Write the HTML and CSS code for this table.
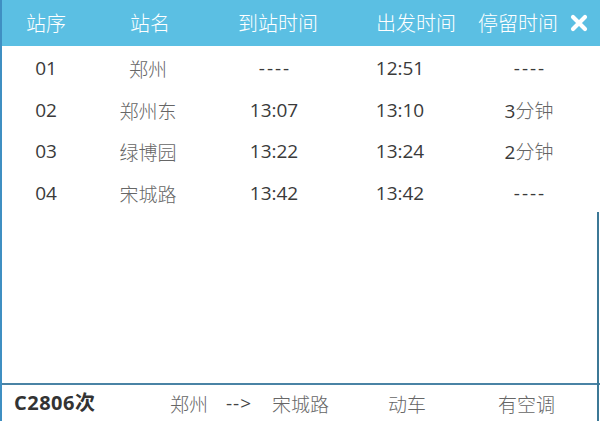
FILE: index.html
```html
<!DOCTYPE html>
<html lang="zh">
<head>
<meta charset="utf-8">
<title>C2806次</title>
<link rel="stylesheet" href="styles.css">
</head>
<body>
<div class="dialog">
  <div class="head">
    <span class="h1">站序</span>
    <span class="h2">站名</span>
    <span class="h3">到站时间</span>
    <span class="h4">出发时间</span>
    <span class="h5">停留时间</span>
    <span class="close"><svg width="18" height="18" viewBox="0 0 18 18"><path d="M3 3 L15 15 M15 3 L3 15" stroke="#fff" stroke-width="4.2" stroke-linecap="round"/></svg></span>
  </div>
  <div class="body">
    <div class="row"><span>01</span><span class="cn">郑州</span><span class="dash">----</span><span>12:51</span><span class="dash">----</span></div>
    <div class="row"><span>02</span><span class="cn">郑州东</span><span>13:07</span><span>13:10</span><span>3<i class="cn">分钟</i></span></div>
    <div class="row"><span>03</span><span class="cn">绿博园</span><span>13:22</span><span>13:24</span><span>2<i class="cn">分钟</i></span></div>
    <div class="row"><span>04</span><span class="cn">宋城路</span><span>13:42</span><span>13:42</span><span class="dash">----</span></div>
  </div>
  <div class="foot">
    <span class="train">C2806次</span>
    <span class="cn f-from">郑州</span>
    <span class="arrow">--&gt;</span>
    <span class="cn f-to">宋城路</span>
    <span class="cn f-type">动车</span>
    <span class="cn f-ac">有空调</span>
  </div>
</div>
</body>
</html>
```

FILE: styles.css
```css
html, body {
  margin: 0;
  padding: 0;
  background: #fff;
}
body {
  font-family: "Open Sans", "Noto Sans CJK SC", sans-serif;
  font-size: 19px;
  color: #3a3a3a;
}
.dialog {
  position: relative;
  width: 600px;
  height: 421px;
  box-sizing: border-box;
  border-left: 2px solid #3f8fc2;
  display: flex;
  flex-direction: column;
}
.dialog::after {
  content: "";
  position: absolute;
  right: 1px;
  top: 212px;
  bottom: 0;
  width: 2px;
  background: #3c7896;
}
.head {
  height: 46px;
  background: #5bbfe3;
  color: #fff;
  display: grid;
  grid-template-columns: 104px 108px 138px 102px 92px 1fr;
  padding-left: 24px;
  align-items: center;
  font-family: "Noto Sans CJK SC", sans-serif;
  font-weight: 300;
  font-size: 20px;
  line-height: 1;
}
.close {
  display: flex;
  align-items: center;
}
.body {
  flex: 1;
  padding-top: 2px;
}
.row {
  height: 41.5px;
  display: grid;
  grid-template-columns: 88px 116px 136px 116px 142px;
  align-items: center;
  text-align: center;
  line-height: 1;
}
.dash {
  letter-spacing: 2px;
  padding-left: 2px;
}
.cn {
  font-family: "Noto Sans CJK SC", sans-serif;
  font-weight: 300;
  color: #666;
  font-style: normal;
}
.foot {
  height: 36px;
  border-top: 2px solid #4a83a5;
  display: flex;
  align-items: center;
  line-height: 1;
}
.train {
  font-weight: 700;
  font-size: 20px;
  letter-spacing: 0.5px;
  color: #333;
  margin-left: 12px;
  width: 156px;
}
.f-from { width: 56px; }
.arrow { color: #444; width: 46px; letter-spacing: 1px; }
.f-to { width: 116px; }
.f-type { width: 110px; }
```
